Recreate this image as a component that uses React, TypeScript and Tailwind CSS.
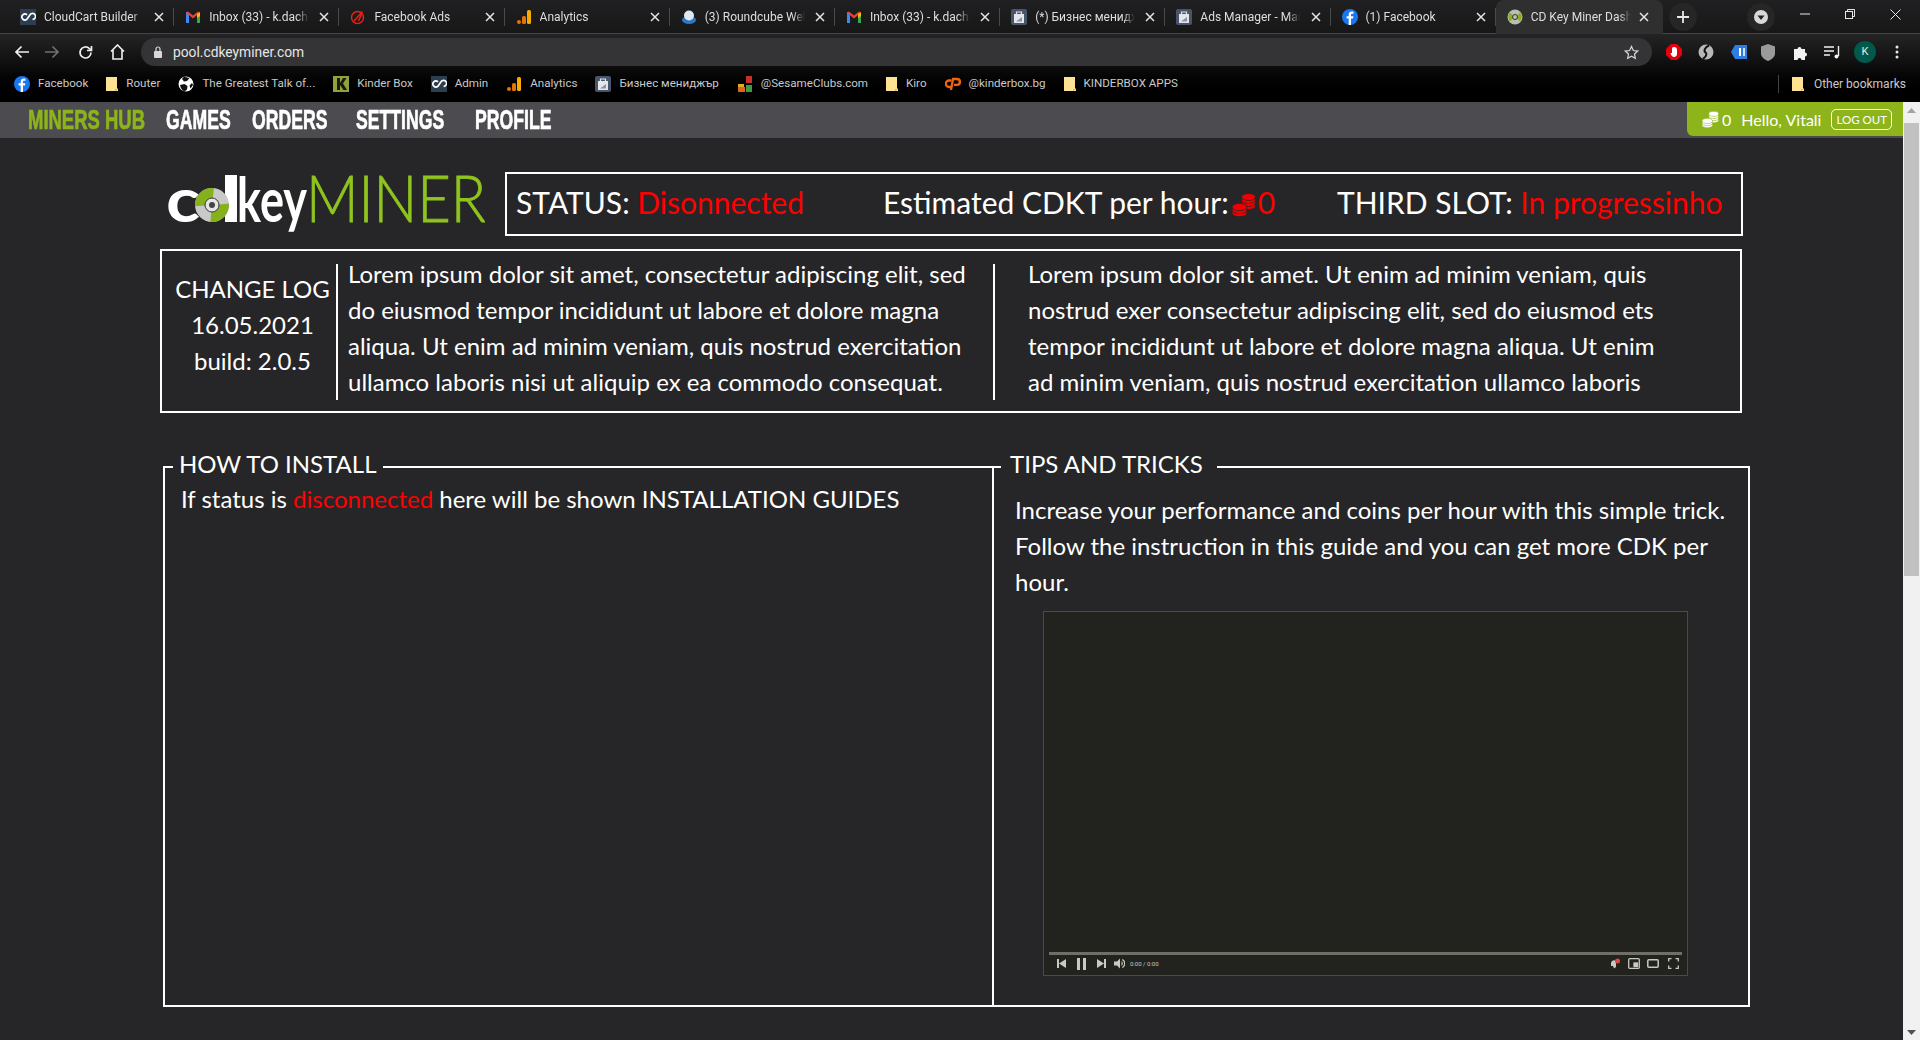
import React from "react";

type IconName = "cc" | "gmail" | "ads" | "analytics" | "round" | "biz" | "fb" | "cdk" | "folder" | "globe" | "kinder" | "sesame" | "cp";

function Favicon({ name }: { name: IconName }) {
  if (name === "cc")
    return (
      <svg width="16" height="16" viewBox="0 0 16 16">
        <rect width="16" height="16" fill="#2c3e50" />
        <path d="M7 5.800a3 3 0 1 0 0 4.400L10 5.800a3 3 0 1 1 2.600 4.600" fill="none" stroke="#fff" strokeWidth="1.700" />
      </svg>
    );
  if (name === "gmail")
    return (
      <svg width="16" height="16" viewBox="0 0 16 16">
        <rect x="1" y="3" width="3" height="11" fill="#4285f4" />
        <rect x="12" y="3" width="3" height="11" fill="#34a853" />
        <path d="M1 3.500 3 2.500l5 4 5-4 2 1-7 6z" fill="#ea4335" />
        <path d="M12 5l3-1.500V7l-3 2z" fill="#fbbc04" />
      </svg>
    );
  if (name === "ads")
    return (
      <svg width="16" height="16" viewBox="0 0 16 16" fill="none">
        <circle cx="7.500" cy="8.500" r="6" stroke="#e2231a" strokeWidth="1.500" />
        <path d="M4 12 12.500 2.500M8.500 12l3-7" stroke="#e2231a" strokeWidth="1.500" />
      </svg>
    );
  if (name === "analytics")
    return (
      <svg width="16" height="16" viewBox="0 0 16 16">
        <rect x="11" y="1" width="4" height="14" rx="1.500" fill="#f9ab00" />
        <rect x="6" y="7" width="4" height="8" rx="1.500" fill="#e37400" />
        <circle cx="3" cy="13" r="2" fill="#e37400" />
      </svg>
    );
  if (name === "round")
    return (
      <svg width="16" height="16" viewBox="0 0 16 16">
        <ellipse cx="8" cy="11" rx="7" ry="4" fill="#2b78c5" />
        <circle cx="8" cy="6.500" r="5" fill="#dfe9f3" />
      </svg>
    );
  if (name === "biz")
    return (
      <svg width="16" height="16" viewBox="0 0 16 16">
        <rect width="16" height="16" rx="2" fill="#48546a" />
        <rect x="3" y="5" width="10" height="9" fill="#e4e6eb" />
        <path d="M5.500 5V3h5v2" fill="none" stroke="#e4e6eb" strokeWidth="1.200" />
        <path d="M5 12.500 11 8v4.500z" fill="#8c93a3" />
      </svg>
    );
  if (name === "fb")
    return (
      <svg width="16" height="16" viewBox="0 0 16 16">
        <circle cx="8" cy="8" r="8" fill="#1877f2" />
        <path d="M9 16V9.500h2l.4-2.300H9V6c0-.8.3-1.200 1.200-1.200h1.300v-2C11 2.700 10.400 2.600 9.800 2.600 7.900 2.600 6.700 3.700 6.700 5.700v1.500H4.600v2.300h2.100V16z" fill="#fff" />
      </svg>
    );
  if (name === "cdk")
    return (
      <svg width="16" height="16" viewBox="0 0 16 16" fill="none">
        <circle cx="8" cy="8" r="7.500" fill="#b9bdb4" />
        <path d="M3 3.500a7 7 0 0 0 0 9l3-3a3 3 0 0 1 0-3zM13 12.500a7 7 0 0 0 0-9l-3 3a3 3 0 0 1 0 3z" fill="#86b11d" />
        <circle cx="8" cy="8" r="2.500" stroke="#333" strokeWidth="1" />
      </svg>
    );
  if (name === "folder")
    return (
      <svg width="12" height="16" viewBox="0 0 12 16">
        <path d="M0 1h11v11l1 1v2H0z" fill="#fde293" />
        <path d="M9 15v-2h3z" fill="#d9b44f" />
      </svg>
    );
  if (name === "globe")
    return (
      <svg width="16" height="16" viewBox="0 0 16 16">
        <circle cx="8" cy="8" r="7.500" fill="#fff" />
        <path d="M6 .8 4 3l2 2.500 3-.5 2.500-3zM2 9l4.500-1 3 2-.5 3.500-2.500 2C4 14.500 2.500 12 2 9zM14 7l1 2-2.500 3.500-1-3z" fill="#111" />
      </svg>
    );
  if (name === "kinder")
    return (
      <svg width="16" height="16" viewBox="0 0 16 16">
        <rect width="16" height="16" fill="#8fa23b" />
        <path d="M4 2h3v5l3-5h3.500L10 7.500 14 14h-3.500L7 9v5H4z" fill="#1a1a10" />
      </svg>
    );
  if (name === "sesame")
    return (
      <svg width="16" height="16" viewBox="0 0 16 16">
        <rect x="9" y="0" width="6" height="7" fill="#c9302c" />
        <rect x="1" y="8" width="6" height="3" fill="#e5a823" />
        <rect x="1" y="11" width="7" height="5" fill="#e0641f" />
        <rect x="9" y="9" width="6" height="7" fill="#3f9b41" />
      </svg>
    );
  return (
    <svg width="16" height="16" viewBox="0 0 16 16" fill="none">
      <path d="M6.500 4.500H4a3 3 0 0 0 0 6.500h3" stroke="#f0640f" strokeWidth="2.300" />
      <path d="M6 14 8 3h4a2.800 2.800 0 0 1 0 5.800H9" stroke="#f0640f" strokeWidth="2.300" />
    </svg>
  );
}

const tabs: { title: string; icon: IconName }[] = [
  { title: "CloudCart Builder", icon: "cc" },
  { title: "Inbox (33) - k.dachev@gmail", icon: "gmail" },
  { title: "Facebook Ads", icon: "ads" },
  { title: "Analytics", icon: "analytics" },
  { title: "(3) Roundcube Webmail", icon: "round" },
  { title: "Inbox (33) - k.dachev@gmail", icon: "gmail" },
  { title: "(*) Бизнес мениджър", icon: "biz" },
  { title: "Ads Manager - Manage", icon: "biz" },
  { title: "(1) Facebook", icon: "fb" },
];

const bookmarks: { title: string; icon: IconName }[] = [
  { title: "Facebook", icon: "fb" },
  { title: "Router", icon: "folder" },
  { title: "The Greatest Talk of...", icon: "globe" },
  { title: "Kinder Box", icon: "kinder" },
  { title: "Admin", icon: "cc" },
  { title: "Analytics", icon: "analytics" },
  { title: "Бизнес мениджър", icon: "biz" },
  { title: "@SesameClubs.com", icon: "sesame" },
  { title: "Kiro", icon: "folder" },
  { title: "@kinderbox.bg", icon: "cp" },
  { title: "KINDERBOX APPS", icon: "folder" },
];

const navItems = [
  { label: "GAMES", cls: "w-[86px]" },
  { label: "ORDERS", cls: "w-[104px]" },
  { label: "SETTINGS", cls: "w-[119px]" },
  { label: "PROFILE", cls: "w-[80px]" },
];

function CloseX() {
  return (
    <svg width="10" height="10" viewBox="0 0 10 10" className="shrink-0" stroke="#e6e6e6" strokeWidth="1.500">
      <path d="M1 1l8 8M9 1 1 9" />
    </svg>
  );
}

function Tab({ title, icon, active }: { title: string; icon: IconName; active?: boolean }) {
  return (
    <div
      className={
        active
          ? "flex h-[34px] w-[167px] shrink-0 items-center rounded-t-lg bg-[#2f2f2f] pl-[11px] pr-[14px]"
          : "relative flex h-[33px] w-[165.200px] shrink-0 items-center pl-[11px] pr-[10px] after:absolute after:right-0 after:top-[8px] after:h-[18px] after:w-px after:bg-[#4a4a4a]"
      }
    >
      <Favicon name={icon} />
      <div className="ml-[8px] w-[100px] overflow-hidden whitespace-nowrap text-[12px] text-[#dedede] [mask-image:linear-gradient(to_right,black_88%,transparent)]">
        {title}
      </div>
      <div className="ml-auto">
        <CloseX />
      </div>
    </div>
  );
}

function BrowserChrome() {
  return (
    <div className="shrink-0 font-[Roboto,sans-serif]">
      {/* tab strip */}
      <div className="flex h-[33px] items-start bg-gradient-to-b from-[#202022] to-[#171717] pl-[9px]">
        {tabs.map((t, i) => (
          <Tab key={i} title={t.title} icon={t.icon} />
        ))}
        <Tab title="CD Key Miner Dashboard" icon="cdk" active />
        <div className="ml-[6px] mt-[3px] flex h-[28px] w-[28px] items-center justify-center rounded-full bg-[#262626]">
          <svg width="14" height="14" viewBox="0 0 14 14" stroke="#e8e8e8" strokeWidth="1.800">
            <path d="M7 1v12M1 7h12" />
          </svg>
        </div>
        <div className="ml-[50px] mt-[3px] flex h-[28px] w-[28px] items-center justify-center rounded-full bg-[#262626]">
          <svg width="16" height="16" viewBox="0 0 16 16">
            <circle cx="8" cy="8" r="7" fill="#d8d8d8" />
            <path d="M4.500 6.500h7L8 11z" fill="#222" />
          </svg>
        </div>
        <div className="ml-[25px] mt-[8px] flex items-center gap-[35px]">
          <svg width="10" height="12" viewBox="0 0 10 12" stroke="#e8e8e8"><path d="M0 6h10" /></svg>
          <svg width="10" height="10" viewBox="0 0 10 10" fill="none" stroke="#e8e8e8"><rect x=".5" y="2.500" width="7" height="7" /><path d="M2.500 2.500v-2h7v7h-2" /></svg>
          <svg width="11" height="11" viewBox="0 0 11 11" stroke="#e8e8e8"><path d="M.5.5l10 10M10.500.5l-10 10" /></svg>
        </div>
      </div>

      {/* toolbar + bookmarks */}
      <div className="h-[69px] border-t border-[#454545] bg-gradient-to-b from-[#242424] via-[#0c0c0c] via-50% to-black">
        <div className="flex h-[36px] items-center">
          <div className="flex w-[141px] shrink-0 items-center pl-[14px]">
            <svg width="15" height="14" viewBox="0 0 15 14" fill="none" stroke="#f0f0f0" strokeWidth="1.700"><path d="M15 7H2M7.500 1.500 2 7l5.500 5.500" /></svg>
            <svg width="15" height="14" viewBox="0 0 15 14" fill="none" stroke="#707070" strokeWidth="1.700" className="ml-[16px]"><path d="M0 7h13M7.500 1.500 13 7l-5.500 5.500" /></svg>
            <svg width="15" height="15" viewBox="0 0 15 15" fill="none" stroke="#f0f0f0" strokeWidth="1.700" className="ml-[18px]"><path d="M13 7.500a5.500 5.500 0 1 1-1.600-3.900L13 5.200" /><path d="M13.500 1v4.500H9" /></svg>
            <svg width="15" height="16" viewBox="0 0 15 16" fill="none" stroke="#f0f0f0" strokeWidth="1.600" className="ml-[17px]"><path d="M1 7.500 7.500 1 14 7.500M3 6v9h9V6" /></svg>
          </div>
          <div className="flex h-[28px] w-[1511px] shrink-0 items-center rounded-full bg-[#343436] pl-[12px] pr-[13px]">
            <svg width="10" height="12" viewBox="0 0 10 12" fill="#d8d8d8"><rect x="1" y="5" width="8" height="7" rx="1" /><path d="M3 5V3a2 2 0 0 1 4 0v2" fill="none" stroke="#d8d8d8" strokeWidth="1.200" /></svg>
            <span className="ml-[10px] text-[13.800px] text-[#e6e6e6]">pool.cdkeyminer.com</span>
            <svg width="15" height="15" viewBox="0 0 24 24" fill="none" stroke="#d5d5d5" strokeWidth="2" className="ml-auto"><path d="m12 2.500 3 6.300 6.800.9-5 4.700 1.300 6.800-6.100-3.300-6.100 3.300 1.300-6.800-5-4.700 6.800-.9z" /></svg>
          </div>
          <div className="ml-[14px] flex items-center">
            <svg width="16" height="16" viewBox="0 0 16 16"><path d="M5 0h6l5 5v6l-5 5H5l-5-5V5z" fill="#e3000f" /><path d="M8 3c2 0 3 1 3 3v4c0 2-1.500 3-3 3s-3-1.500-3.500-4L6 9V4.500C6 3.500 7 3 8 3z" fill="#fff" /></svg>
            <svg width="16" height="18" viewBox="0 0 16 18" className="ml-[16px]"><circle cx="8" cy="9" r="7.500" fill="#b8b8b8" /><path d="M11 2.500C7 4 5 8 8 10c1 1 0 4-3 5.500" fill="none" stroke="#111" strokeWidth="2" /></svg>
            <svg width="16" height="14" viewBox="0 0 16 14" className="ml-[17px]"><path d="M4 0h12v14H4L0 7z" fill="#2f7de1" /><rect x="8" y="3" width="2" height="8" fill="#fff" /><rect x="12" y="3" width="2" height="8" fill="#cfe0fa" /></svg>
            <svg width="14" height="17" viewBox="0 0 14 17" className="ml-[14px]"><path d="M7 0l7 2.500v7c0 3.500-3.500 6-7 7.500-3.500-1.500-7-4-7-7.500v-7z" fill="#9a9a9a" /></svg>
            <svg width="15" height="15" viewBox="0 0 15 15" fill="#f2f2f2" className="ml-[18px]"><path d="M1 4h3.500a2 2 0 1 1 4 0H12v3.500a2 2 0 1 1 0 4V15H8.500a2 2 0 1 0-4 0H1z" /></svg>
            <svg width="16" height="14" viewBox="0 0 16 14" fill="none" stroke="#f2f2f2" strokeWidth="1.400" className="ml-[16px]"><path d="M0 2h10M0 6h10M0 10h6M14.500 1v10" /><circle cx="12.500" cy="11.500" r="2" fill="#f2f2f2" stroke="none" /></svg>
            <div className="ml-[14px] flex h-[22px] w-[22px] items-center justify-center rounded-full bg-[#00594c] text-[11px] text-[#e8e8e8]">K</div>
            <svg width="4" height="14" viewBox="0 0 4 14" fill="#e8e8e8" className="ml-[19px]"><circle cx="2" cy="2" r="1.500" /><circle cx="2" cy="7" r="1.500" /><circle cx="2" cy="12" r="1.500" /></svg>
          </div>
        </div>
        <div className="flex h-[30px] items-center pb-[2px] pl-[14px] pr-[14px] text-[11.600px] text-[#c9c9c9]">
          <div className="flex items-center gap-[18px]">
            {bookmarks.map((b, i) => (
              <div key={i} className="flex items-center gap-[8px] whitespace-nowrap">
                <Favicon name={b.icon} />
                {b.title}
              </div>
            ))}
          </div>
          <div className="ml-auto flex items-center gap-[10px] whitespace-nowrap border-l border-[#444] pl-[13px] text-[12px]">
            <Favicon name="folder" />
            Other bookmarks
          </div>
        </div>
      </div>
    </div>
  );
}

// two stacks of coins, the gaps between discs take the colour of what is behind
function Coins({ cls, fill, gap }: { cls: string; fill: string; gap: string }) {
  const right = [13, 10, 7, 4];
  const left = [20, 17, 14];
  return (
    <svg viewBox="0 0 24 24" className={cls}>
      {right.map((y) => (
        <ellipse key={y} cx="16.500" cy={y} rx="7" ry="3.500" fill={fill} stroke={gap} strokeWidth="0.800" />
      ))}
      {left.map((y) => (
        <ellipse key={y} cx="7.500" cy={y} rx="7.500" ry="3.700" fill={fill} stroke={gap} strokeWidth="0.800" />
      ))}
    </svg>
  );
}

function NavBar() {
  return (
    <div className="flex h-[36px] shrink-0 items-center bg-[#4c4c50] pb-px pl-[28px] font-['Liberation_Sans',sans-serif] text-[28px] font-bold text-white [-webkit-text-stroke:0.7px]">
      <span className="w-[138px] origin-left scale-x-[0.66] whitespace-nowrap text-[#8db41b]">MINERS HUB</span>
      {navItems.map((n) => (
        <span key={n.label} className={n.cls + " origin-left scale-x-[0.63] whitespace-nowrap"}>
          {n.label}
        </span>
      ))}
      <div className="ml-auto flex h-[34px] w-[216px] items-center self-start rounded-bl-md bg-[#8db41b] pl-[15px] pt-px font-[Lato,sans-serif] text-[16px] font-normal text-white [-webkit-text-stroke:0px]">
        <Coins cls="h-[17px] w-[17px]" fill="#fff" gap="#8db41b" />
        <span className="ml-[3px]">0</span>
        <span className="ml-[10px]">Hello, Vitali</span>
        <span className="ml-[10px] rounded-[5px] border border-white px-[4px] py-[1px] text-[11.500px]">LOG OUT</span>
      </div>
    </div>
  );
}

function Logo() {
  return (
    <svg width="320" height="66" viewBox="0 0 320 66" className="shrink-0">
      <text x="1" y="51" fontFamily="Lato" fontWeight="700" fontSize="62" fill="#fff" textLength="34" lengthAdjust="spacingAndGlyphs">c</text>
      <rect x="60" y="4" width="12" height="47" fill="#fff" />
      <circle cx="47" cy="34" r="17" fill="#c9c9c9" />
      <circle cx="47" cy="34" r="12" fill="none" stroke="#85b21c" strokeWidth="10" strokeDasharray="21 16.700" transform="rotate(-5 47 34)" />
      <circle cx="47" cy="34" r="7" fill="#e6e6e6" stroke="#333" />
      <circle cx="47" cy="34" r="3" fill="#444" />
      <text x="72" y="51" fontFamily="Lato" fontWeight="700" fontSize="62" fill="#fff" textLength="70" lengthAdjust="spacingAndGlyphs">key</text>
      <text x="141" y="51" fontFamily="Lato" fontWeight="300" fontSize="65" fill="#8fc31f" stroke="#8fc31f" strokeWidth="0.800" textLength="180" lengthAdjust="spacingAndGlyphs">MINER</text>
    </svg>
  );
}

function StatusBar() {
  return (
    <div className="ml-[20px] flex h-[64px] w-[1238px] items-center whitespace-nowrap border-2 border-white pb-[4px] pl-[9px] text-[30px] text-white">
      <div className="w-[367px]">
        STATUS: <span className="text-[#ff0000]">Disonnected</span>
      </div>
      <div className="flex w-[454px] items-center">
        Estimated CDKT per hour:
        <Coins cls="ml-[1px] mt-[6px] h-[24px] w-[28px]" fill="#f00000" gap="#262628" />
        <span className="text-[#ff0000]">0</span>
      </div>
      <div>
        THIRD SLOT: <span className="text-[#ff0000]">In progressinho</span>
      </div>
    </div>
  );
}

function ChangeLog() {
  return (
    <div className="mt-[12px] flex h-[164px] w-[1582px] items-start border-2 border-white text-[24px] leading-[36px] text-white">
      <div className="mt-[20px] w-[174px] shrink-0 whitespace-nowrap pl-[7px] text-center">
        CHANGE LOG
        <br />
        16.05.2021
        <br />
        build: 2.0.5
      </div>
      <div className="mt-[13px] flex h-[136px] w-[657px] shrink-0 items-center border-l-2 border-white pb-[8px] pl-[10px]">
        <p className="whitespace-nowrap">
          Lorem ipsum dolor sit amet, consectetur adipiscing elit, sed
          <br />
          do eiusmod tempor incididunt ut labore et dolore magna
          <br />
          aliqua. Ut enim ad minim veniam, quis nostrud exercitation
          <br />
          ullamco laboris nisi ut aliquip ex ea commodo consequat.
        </p>
      </div>
      <div className="mt-[13px] flex h-[136px] items-center border-l-2 border-white pb-[8px] pl-[33px]">
        <p className="whitespace-nowrap">
          Lorem ipsum dolor sit amet. Ut enim ad minim veniam, quis
          <br />
          nostrud exer consectetur adipiscing elit, sed do eiusmod ets
          <br />
          tempor incididunt ut labore et dolore magna aliqua. Ut enim
          <br />
          ad minim veniam, quis nostrud exercitation ullamco laboris
        </p>
      </div>
    </div>
  );
}

function VideoControls() {
  return (
    <div className="mt-auto px-[5px] pb-[3px]">
      <div className="h-[3px] bg-[#6f6f68]" />
      <div className="flex h-[17px] items-center pl-[8px] pr-[3px] text-[#c9c9c2]">
        <svg width="9" height="9" viewBox="0 0 9 9" fill="currentColor"><path d="M0 0h2v9H0zM9 0v9L2 4.500z" /></svg>
        <svg width="9" height="12" viewBox="0 0 9 12" fill="currentColor" className="ml-[11px]"><path d="M0 0h3v12H0zM6 0h3v12H6z" /></svg>
        <svg width="9" height="9" viewBox="0 0 9 9" fill="currentColor" className="ml-[11px]"><path d="M7 0h2v9H7zM0 0v9l7-4.500z" /></svg>
        <svg width="11" height="11" viewBox="0 0 11 11" fill="currentColor" className="ml-[8px]"><path d="M0 3.500h3L6 .500v10l-3-3H0zM7.500 3a3 3 0 0 1 0 5zM8.500 1a5 5 0 0 1 0 9l-.5-1a4 4 0 0 0 0-7z" /></svg>
        <span className="ml-[5px] font-[Roboto,sans-serif] text-[6px] leading-none">0:00 / 0:00</span>
        <div className="ml-auto flex items-center">
          <svg width="11" height="11" viewBox="0 0 11 11"><path d="M1 5a3 3 0 0 1 5-2v6L4 10.500 3 8H1z" fill="currentColor" /><circle cx="7.500" cy="3" r="2.500" fill="#e0483e" /></svg>
          <svg width="12" height="11" viewBox="0 0 12 11" fill="none" stroke="currentColor" strokeWidth="1.300" className="ml-[7px]"><rect x=".7" y=".7" width="10.600" height="9.600" rx="1" /><rect x="6" y="5" width="3.500" height="3.500" fill="currentColor" /></svg>
          <svg width="12" height="9" viewBox="0 0 12 9" fill="none" stroke="currentColor" strokeWidth="1.500" className="ml-[7px]"><rect x=".8" y=".8" width="10.400" height="7.400" rx="1" /></svg>
          <svg width="11" height="11" viewBox="0 0 11 11" fill="none" stroke="currentColor" strokeWidth="1.300" className="ml-[9px]"><path d="M.7 3.500V.7h2.800M7.500.7h2.800v2.800M10.300 7.500v2.800H7.500M3.500 10.300H.7V7.500" /></svg>
        </div>
      </div>
    </div>
  );
}

function Panels() {
  return (
    <div className="ml-[3px] mt-[33px] flex h-[561px] w-[1587px] text-[24px] leading-[36px] text-white">
      <fieldset className="h-full w-[829px] shrink-0 border-2 border-r-0 border-white pl-[16px]">
        <legend className="ml-[-8px] pb-[5px] pl-[6px] pr-[7px] text-[24px] leading-[36px]">HOW TO INSTALL</legend>
        <p className="-mt-[6px]">
          If status is <span className="text-[#ff0000]">disconnected</span> here will be shown INSTALLATION GUIDES
        </p>
      </fieldset>
      <fieldset className="flex h-full min-w-0 flex-1 flex-col border-2 border-white pl-[21px]">
        <legend className="ml-[-14px] pb-[5px] pl-[9px] pr-[14px] text-[24px] leading-[36px]">TIPS AND TRICKS</legend>
        <p className="mt-[5px] whitespace-nowrap">
          Increase your performance and coins per hour with this simple trick.
          <br />
          Follow the instruction in this guide and you can get more CDK per
          <br />
          hour.
        </p>
        <div className="ml-[28px] mt-[11px] flex h-[365px] w-[645px] flex-col border border-[#4a4a46] bg-[#22221e]">
          <VideoControls />
        </div>
      </fieldset>
    </div>
  );
}

function Scrollbar() {
  return (
    <div className="flex w-[17px] shrink-0 flex-col items-center bg-[#f1f1f1]">
      <svg width="9" height="6" viewBox="0 0 9 6" fill="#a3a3a3" className="mt-[6px]"><path d="M4.500 0 9 5H0z" /></svg>
      <div className="mt-[9px] h-[453px] w-[15px] bg-[#c1c1c1]" />
      <svg width="9" height="6" viewBox="0 0 9 6" fill="#505050" className="mb-[5px] mt-auto"><path d="M4.500 6 9 1H0z" /></svg>
    </div>
  );
}

export default function App() {
  return (
    <div className="flex h-[1040px] w-[1920px] flex-col overflow-hidden bg-[#262628]">
      <BrowserChrome />
      <div className="flex min-h-0 flex-1">
        <main className="min-w-0 flex-1 font-[Lato,sans-serif]">
          <NavBar />
          <div className="pl-[160px] pt-[33px]">
            <div className="flex items-center">
              <div className="ml-[5px]">
                <Logo />
              </div>
              <StatusBar />
            </div>
            <ChangeLog />
            <Panels />
          </div>
        </main>
        <Scrollbar />
      </div>
    </div>
  );
}
